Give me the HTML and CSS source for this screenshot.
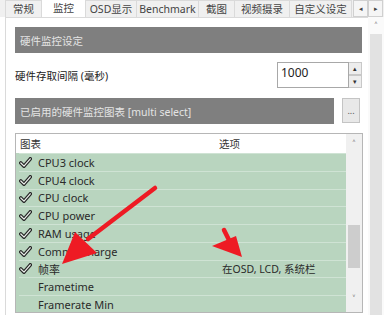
FILE: index.html
```html
<!DOCTYPE html>
<html lang="zh">
<head>
  <meta charset="UTF-8">
  <title>监控</title>
  <link rel="stylesheet" href="styles.css">
</head>
<body>
  <div class="tabs">
    <div class="tab t1">常规</div>
    <div class="tab t2 active">监控</div>
    <div class="tab t3">OSD显示</div>
    <div class="tab t4">Benchmark</div>
    <div class="tab t5">截图</div>
    <div class="tab t6">视频摄录</div>
    <div class="tab t7">自定义设定</div>
    <div class="tab-arrows"><span>&#9666;</span><span>&#9656;</span></div>
  </div>

  <div class="body-row">
    <div class="panel">
      <div class="section-bar">硬件监控设定</div>

      <div class="field-row">
        <span class="label">硬件存取间隔 (毫秒)</span>
        <div class="spin">
          <div class="spin-input">1000</div>
          <div class="spin-btns"><span>&#9652;</span><span>&#9662;</span></div>
        </div>
      </div>

      <div class="bar-row">
        <div class="section-bar">已启用的硬件监控图表 [multi select]</div>
        <div class="dots">...</div>
      </div>

      <div class="list">
        <div class="list-main">
          <div class="list-head"><span class="col-a">图表</span><span class="col-b">选项</span></div>
          <div class="row"><span class="col-a"><svg class="chk" viewBox="0 0 13 11"><path d="M1.8 6 L5 9.2 L11.3 1.8"/><path class="in" d="M1.8 6 L5 9.2 L11.3 1.8"/></svg>CPU3 clock</span></div>
          <div class="row"><span class="col-a"><svg class="chk" viewBox="0 0 13 11"><path d="M1.8 6 L5 9.2 L11.3 1.8"/><path class="in" d="M1.8 6 L5 9.2 L11.3 1.8"/></svg>CPU4 clock</span></div>
          <div class="row"><span class="col-a"><svg class="chk" viewBox="0 0 13 11"><path d="M1.8 6 L5 9.2 L11.3 1.8"/><path class="in" d="M1.8 6 L5 9.2 L11.3 1.8"/></svg>CPU clock</span></div>
          <div class="row"><span class="col-a"><svg class="chk" viewBox="0 0 13 11"><path d="M1.8 6 L5 9.2 L11.3 1.8"/><path class="in" d="M1.8 6 L5 9.2 L11.3 1.8"/></svg>CPU power</span></div>
          <div class="row"><span class="col-a"><svg class="chk" viewBox="0 0 13 11"><path d="M1.8 6 L5 9.2 L11.3 1.8"/><path class="in" d="M1.8 6 L5 9.2 L11.3 1.8"/></svg>RAM usage</span></div>
          <div class="row"><span class="col-a"><svg class="chk" viewBox="0 0 13 11"><path d="M1.8 6 L5 9.2 L11.3 1.8"/><path class="in" d="M1.8 6 L5 9.2 L11.3 1.8"/></svg>Commit charge</span></div>
          <div class="row"><span class="col-a"><svg class="chk" viewBox="0 0 13 11"><path d="M1.8 6 L5 9.2 L11.3 1.8"/><path class="in" d="M1.8 6 L5 9.2 L11.3 1.8"/></svg>帧率</span><span class="col-b">在OSD, LCD, 系统栏</span></div>
          <div class="row"><span class="col-a"><span class="nochk"></span>Frametime</span></div>
          <div class="row"><span class="col-a"><span class="nochk"></span>Framerate Min</span></div>
        </div>
        <div class="list-scroll">
          <span class="arr-up">&#708;</span>
          <span class="thumb"></span>
          <span class="arr-down">&#709;</span>
        </div>
      </div>
    </div>

    <div class="outer-scroll">
      <span class="arr-up">&#708;</span>
      <span class="outer-thumb"></span>
    </div>
  </div>

  <svg class="annot" viewBox="0 0 384 315" width="384" height="315">
    <line x1="155" y1="188" x2="88" y2="239" class="red-line"/>
    <polygon points="62,264 75,232 97,253" class="red-head"/>
    <line x1="224" y1="230" x2="230" y2="242" class="red-line"/>
    <polygon points="242,257 212,246 236,236" class="red-head"/>
  </svg>
</body>
</html>
```

FILE: styles.css
```css
body {
  margin: 0;
  width: 384px;
  height: 315px;
  overflow: hidden;
  background: #fff;
  font-family: "Noto Sans", "Noto Sans CJK SC", sans-serif;
  font-size: 11px;
  color: #333;
  position: relative;
}

.tabs {
  display: flex;
  height: 17px;
  background: #f0f0f0;
  padding-left: 5px;
  font-size: 10.5px;
}

.tab {
  display: flex;
  align-items: center;
  justify-content: center;
  border-right: 1px solid #dadada;
  border-top: 1px solid #dadada;
  box-sizing: border-box;
  color: #444;
  line-height: 1;
}

.t1 { width: 37px; border-left: 1px solid #dadada; }
.t2 { width: 44px; }
.t3 { width: 51px; }
.t4 { width: 62px; }
.t5 { width: 36px; }
.t6 { width: 55px; }
.t7 { width: 62px; }

.tab.active {
  background: #fff;
  border-top: none;
}

.tab-arrows {
  display: flex;
  margin-left: 1px;
}

.tab-arrows span {
  width: 15px;
  height: 17px;
  box-sizing: border-box;
  border: 1px solid #d0d0d0;
  background: #f5f5f5;
  font-size: 7px;
  color: #444;
  display: flex;
  align-items: center;
  justify-content: center;
}

.body-row {
  display: flex;
  height: 298px;
}

.panel {
  width: 363px;
  margin-left: 5px;
  box-sizing: border-box;
  border-left: 1px solid #dadada;
  border-top: 1px solid #dadada;
  padding: 9px 5px 0 9px;
  background: #fff;
}

.section-bar {
  height: 26px;
  background: #7f7f7f;
  color: #e4e4e4;
  display: flex;
  align-items: center;
  padding-left: 5px;
  font-size: 10.5px;
  margin-right: 1px;
}

.field-row {
  display: flex;
  align-items: center;
  justify-content: space-between;
  margin-top: 9px;
  height: 26px;
  margin-right: 1px;
}

.label {
  font-size: 10.5px;
  color: #222;
}

.spin {
  display: flex;
  height: 26px;
}

.spin-input {
  width: 72px;
  box-sizing: border-box;
  border: 1px solid #a8a8a8;
  padding: 4px 3px;
  font-size: 12px;
  color: #222;
  line-height: 1;
}

.spin-btns {
  width: 13px;
  display: flex;
  flex-direction: column;
}

.spin-btns span {
  flex: 1;
  border: 1px solid #c8c8c8;
  border-left: none;
  background: #ededed;
  font-size: 7px;
  display: flex;
  align-items: center;
  justify-content: center;
  color: #333;
}

.bar-row {
  display: flex;
  margin-top: 10px;
  gap: 8px;
  margin-right: 3px;
}

.bar-row .section-bar {
  flex: 1;
  margin-right: 0;
}

.dots {
  width: 18px;
  height: 25px;
  box-sizing: border-box;
  border: 1px solid #c4c4c4;
  background: #e8e8e8;
  font-size: 9px;
  display: flex;
  align-items: center;
  justify-content: center;
  color: #555;
}

.list {
  display: flex;
  margin-top: 9px;
  height: 180px;
  border: 1px solid #b6b6b6;
  box-sizing: border-box;
}

.list-main {
  flex: 1;
  padding-left: 3px;
  background: #b9d5bf;
}

.list-head {
  display: flex;
  align-items: center;
  height: 19px;
  background: #fff;
  margin-left: -3px;
  padding-left: 4px;
  font-size: 10.5px;
}

.list-head .col-b {
  padding-left: 1px;
}

.col-a {
  width: 198px;
  display: flex;
  align-items: center;
}

.row {
  display: flex;
  align-items: center;
  height: 17.75px;
  box-sizing: border-box;
  border-top: 1px solid #cfe3d4;
  font-size: 11px;
  color: #2a2a2a;
}

.row .col-b {
  padding-left: 5px;
  font-size: 10.5px;
}

.chk {
  width: 13px;
  height: 11px;
  margin-right: 6px;
  flex: none;
}

.chk path {
  fill: none;
  stroke: #262626;
  stroke-width: 3.6;
  stroke-linecap: round;
  stroke-linejoin: round;
}

.chk path.in {
  stroke: #eef2ee;
  stroke-width: 1.2;
}

.nochk {
  width: 13px;
  margin-right: 6px;
}

.list-scroll {
  width: 16px;
  background: #f0f0f0;
  position: relative;
  display: flex;
  flex-direction: column;
  align-items: center;
}

.arr-up,
.arr-down {
  font-size: 10px;
  color: #555;
  line-height: 1;
}

.list-scroll .arr-up {
  margin-top: 5px;
}

.thumb {
  width: 12px;
  height: 43px;
  background: #cdcdcd;
  margin-top: 76px;
}

.list-scroll .arr-down {
  margin-top: 26px;
}

.outer-scroll {
  width: 16px;
  display: flex;
  flex-direction: column;
  align-items: center;
  background: #fafafa;
}

.outer-scroll .arr-up {
  margin-top: 4px;
}

.outer-thumb {
  width: 12px;
  flex: 1;
  margin-top: 3px;
  background: #e2e2e2;
}

.annot {
  position: absolute;
  left: 0;
  top: 0;
  pointer-events: none;
}

.red-line {
  stroke: #ee1b24;
  stroke-width: 4.5;
  stroke-linecap: round;
}

.red-head {
  fill: #ee1b24;
}
```
